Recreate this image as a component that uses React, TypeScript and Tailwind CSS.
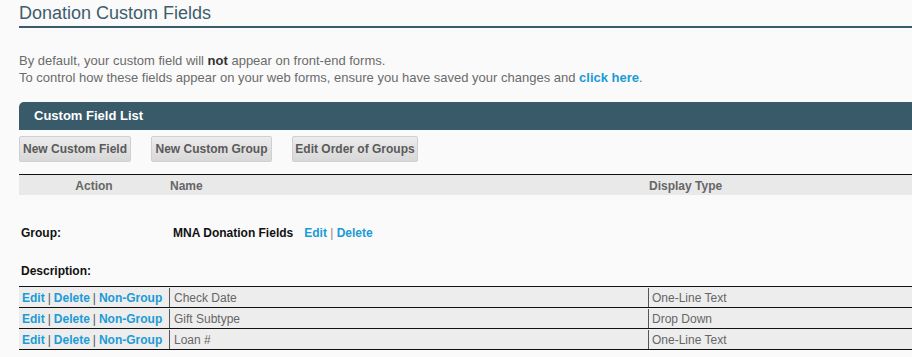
const rows = [
  { name: "Check Date", type: "One-Line Text" },
  { name: "Gift Subtype", type: "Drop Down" },
  { name: "Loan #", type: "One-Line Text" },
];

const Button = (props: { label: string; width: string }) => (
  <button
    className={
      "h-[26px] rounded-[2px] border border-[#cfcfcf] bg-gradient-to-b from-[#ececec] to-[#d8d8d8] text-[12px] font-bold text-[#5a5a5a] " +
      props.width
    }
  >
    {props.label}
  </button>
);

export default function App() {
  return (
    <div
      className="h-[357px] w-[912px] overflow-hidden bg-[#fafafa] pl-[19px]"
      style={{ fontFamily: '"Liberation Sans", Arial, sans-serif' }}
    >
      <div className="w-[910px]">
        <h1 className="border-b-2 border-[#3a5b6b] pt-[2px] pb-[2px] text-[18px] leading-[22px] font-normal text-[#3e5d6d]">
          Donation Custom Fields
        </h1>

        <div className="mt-[24px] text-[13px] leading-[17px] text-[#6b6b6b]">
          <div>
            By default, your custom field will{" "}
            <b className="text-[#333]">not</b> appear on front-end forms.
          </div>
          <div>
            To control how these fields appear on your web forms, ensure you
            have saved your changes and{" "}
            <a className="font-bold text-[#1b9bd7]">click here</a>.
          </div>
        </div>

        <div className="mt-[16px] flex h-[28px] items-center rounded-tl-[5px] rounded-tr-[5px] bg-[#385a69] pl-[15px] text-[13px] font-bold text-white">
          Custom Field List
        </div>

        <div className="mt-[6px] flex gap-[20px]">
          <Button label="New Custom Field" width="w-[112px]" />
          <Button label="New Custom Group" width="w-[121px]" />
          <Button label="Edit Order of Groups" width="w-[126px]" />
        </div>

        <div className="mt-[12px] text-[12px]">
          <div className="flex h-[21px] items-center border-t border-[#111] bg-[#e9e9e9] pt-[1px] font-bold text-[#666]">
            <div className="w-[150px] text-center">Action</div>
            <div className="w-[479px] pl-[1px]">Name</div>
            <div className="flex-1 pl-[1px]">Display Type</div>
          </div>

          <div className="mt-[28px] flex h-[20px] items-center font-bold text-[#111]">
            <div className="w-[154px] pl-[2px]">Group:</div>
            <div>MNA Donation Fields</div>
            <div className="ml-[11px] font-normal text-[#888]">
              <a className="font-bold text-[#1b9bd7]">Edit</a> |{" "}
              <a className="font-bold text-[#1b9bd7]">Delete</a>
            </div>
          </div>

          <div className="mt-[18px] flex h-[20px] items-center pl-[2px] font-bold text-[#111]">
            Description:
          </div>

          <div className="mt-[5px] border-b border-[#111]">
            {rows.map((row) => (
              <div
                key={row.name}
                className="flex h-[21px] border-t border-[#111] bg-[#ededed] pt-[1px] text-[#666]"
              >
                <div className="flex w-[150px] items-center pl-[3px] text-[#555]">
                  <a className="font-bold text-[#1b9bd7]">Edit</a>
                  <span className="px-[3px]">|</span>
                  <a className="font-bold text-[#1b9bd7]">Delete</a>
                  <span className="px-[3px]">|</span>
                  <a className="font-bold text-[#1b9bd7]">Non-Group</a>
                </div>
                <div className="flex w-[479px] items-center border-l border-[#555] pl-[4px]">
                  {row.name}
                </div>
                <div className="flex flex-1 items-center border-l border-[#555] pl-[3px]">
                  {row.type}
                </div>
              </div>
            ))}
          </div>
        </div>
      </div>
    </div>
  );
}
